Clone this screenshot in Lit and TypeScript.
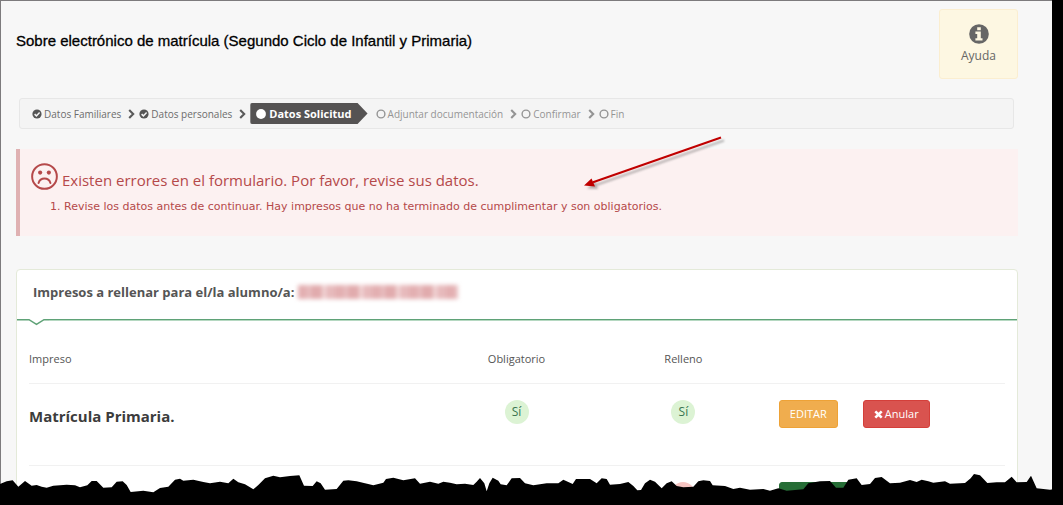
import { LitElement, html, css, svg } from "lit";
import { customElement } from "lit/decorators.js";

type StepState = "done" | "current" | "pending";

interface Step {
  label: string;
  state: StepState;
}

const STEPS: Step[] = [
  { label: "Datos Familiares", state: "done" },
  { label: "Datos personales", state: "done" },
  { label: "Datos Solicitud", state: "current" },
  { label: "Adjuntar documentación", state: "pending" },
  { label: "Confirmar", state: "pending" },
  { label: "Fin", state: "pending" },
];

const stepIcon = (state: StepState) => {
  if (state === "done") {
    return html`<svg class="dot" viewBox="0 0 10 10" aria-hidden="true">
      <circle cx="5" cy="5" r="4.6" fill="currentColor" />
      <path d="M2.6 5.1 4.4 6.9 7.6 3.5" fill="none" stroke="#f4f4f4" stroke-width="1.5" />
    </svg>`;
  }
  if (state === "current") {
    return html`<svg class="dot" viewBox="0 0 10 10" aria-hidden="true">
      <circle cx="5" cy="5" r="4.9" fill="currentColor" />
    </svg>`;
  }
  return html`<svg class="dot" viewBox="0 0 10 10" aria-hidden="true">
    <circle cx="5" cy="5" r="3.9" fill="none" stroke="currentColor" stroke-width="1.4" />
  </svg>`;
};

const chevron = html`<svg class="chevron" viewBox="0 0 7 10" aria-hidden="true">
  <path d="M1.2 1 5.2 5 1.2 9" fill="none" stroke="currentColor" stroke-width="2.1" />
</svg>`;

@customElement("wizard-steps")
export class WizardSteps extends LitElement {
  static styles = css`
    :host {
      display: block;
    }
    .bar {
      display: flex;
      align-items: center;
      box-sizing: border-box;
      min-height: 31px;
      margin: 0;
      padding: 0 12px;
      list-style: none;
      border: 1px solid #e7e7e7;
      border-radius: 3px;
      background: #f4f4f4;
      font-size: 10px;
      line-height: 16px;
    }
    .step {
      display: flex;
      align-items: center;
      color: #6c6c6c;
    }
    .label {
      display: flex;
      align-items: center;
      gap: 2px;
    }
    .dot {
      width: 10px;
      height: 10px;
    }
    .chevron {
      width: 7px;
      height: 10px;
      margin: 0 4px 0 7px;
      color: #5a5a5a;
    }
    .done .dot {
      color: #555;
    }
    .pending,
    .pending .chevron {
      color: #949494;
    }
    .current {
      margin-right: 8px;
    }
    .current .label {
      gap: 3px;
      height: 21px;
      padding: 0 16px 0 6px;
      border-radius: 2px;
      background: #555353;
      clip-path: polygon(0 0, calc(100% - 10px) 0, 100% 50%, calc(100% - 10px) 100%, 0 100%);
      color: #fff;
      font-size: 11px;
      font-weight: 700;
    }
  `;

  render() {
    return html`<ol class="bar">
      ${STEPS.map(
        (step, i) => html`<li class="step ${step.state}" aria-current=${step.state === "current" ? "step" : "false"}>
          <span class="label">${stepIcon(step.state)}<span>${step.label}</span></span>
          ${step.state !== "current" && i < STEPS.length - 1 ? chevron : ""}
        </li>`,
      )}
    </ol>`;
  }
}

@customElement("error-alert")
export class ErrorAlert extends LitElement {
  static styles = css`
    :host {
      display: block;
      box-sizing: border-box;
      min-height: 87px;
      padding: 13px 11px 8px;
      border-left: 4px solid #dfb1b2;
      background: #fcf1f1;
      color: #b5494a;
    }
    .heading {
      display: flex;
      align-items: center;
      gap: 4px;
      margin: 0;
      font-size: 15px;
      font-weight: 400;
      line-height: 20px;
    }
    .heading span {
      padding-top: 8px;
    }
    .face {
      width: 27px;
      height: 27px;
    }
    .list {
      margin: 9px 0 0;
      padding-left: 33px;
      font: 11px/16px "DejaVu Sans", Verdana, sans-serif;
    }
  `;

  render() {
    return html`<h2 class="heading">
        <svg class="face" viewBox="0 0 26 26" aria-hidden="true">
          <circle cx="13" cy="13" r="11.9" fill="none" stroke="currentColor" stroke-width="1.9" />
          <circle cx="8.8" cy="9.2" r="2" fill="currentColor" />
          <circle cx="17.2" cy="9.2" r="2" fill="currentColor" />
          <path d="M7.3 19.2C8.2 16.4 10.4 15 13 15s4.8 1.4 5.7 4.2" fill="none" stroke="currentColor" stroke-width="1.9" stroke-linecap="round" />
        </svg>
        <span>Existen errores en el formulario. Por favor, revise sus datos.</span>
      </h2>
      <ol class="list">
        <li>Revise los datos antes de continuar. Hay impresos que no ha terminado de cumplimentar y son obligatorios.</li>
      </ol>`;
  }
}

@customElement("forms-card")
export class FormsCard extends LitElement {
  static styles = css`
    :host {
      display: block;
      border: 1px solid #e4ead9;
      border-radius: 4px;
      background: #fff;
      color: #555;
    }
    .head {
      display: flex;
      align-items: center;
      gap: 4px;
      height: 44px;
      padding: 0 16px;
    }
    .title {
      margin: 0;
      font-size: 13px;
      font-weight: 700;
      line-height: 18px;
    }
    .redacted {
      width: 160px;
      height: 14px;
      background: repeating-linear-gradient(90deg, #e3afb1 0 9px, #e9bfc1 9px 13px, #e1abad 13px 24px, #f2d6d7 24px 28px, #e7babc 28px 37px);
      filter: blur(2px);
    }
    .rule {
      display: flex;
      height: 10px;
      margin-top: 5px;
      color: #5fa277;
    }
    .notch {
      flex: none;
      width: 32px;
      height: 8px;
    }
    .line {
      flex: 1;
      height: 1px;
      border-bottom: 1px solid #b5d8c1;
      background: currentColor;
    }
    .body {
      padding: 5px 12px 0;
    }
    table {
      width: 100%;
      table-layout: fixed;
      border-collapse: separate;
      border-spacing: 0;
      font-size: 11px;
      line-height: 16px;
    }
    th,
    td {
      padding: 0;
      border-bottom: 1px solid #f1f1f1;
      font-weight: 400;
      text-align: center;
      vertical-align: top;
    }
    thead th {
      height: 32px;
      padding-top: 17px;
    }
    tbody th,
    tbody td {
      height: 65px;
      padding-top: 16px;
    }
    .name {
      width: 41.4%;
      text-align: left;
    }
    .flag {
      width: 17.1%;
    }
    tbody .name {
      padding-top: 22px;
      height: 59px;
      color: #3c3c3c;
      font-size: 15px;
      font-weight: 700;
      line-height: 20px;
    }
    .badge {
      display: inline-block;
      width: 24px;
      height: 24px;
      border-radius: 50%;
      background: #dcf3d4;
      color: #3a7550;
      font-size: 12px;
      line-height: 24px;
    }
    .badge.no {
      background: #f5c4c1;
      color: #a94442;
    }
    .actions {
      display: flex;
      gap: 25px;
      padding-left: 12px;
    }
    button {
      display: flex;
      align-items: center;
      gap: 2px;
      height: 28px;
      padding: 0 10px;
      border: 1px solid #eea236;
      border-radius: 3px;
      background: #f0ad4e;
      color: #fff;
      font: inherit;
    }
    .danger {
      border-color: #d43f3a;
      background: #d9534f;
    }
    .fill {
      border-color: #266d36;
      background: #266d36;
    }
    .cross {
      width: 9px;
      height: 9px;
    }
  `;

  render() {
    return html`<div class="head">
        <h2 class="title">Impresos a rellenar para el/la alumno/a:</h2>
        <span class="redacted"></span>
      </div>
      <div class="rule">
        <svg class="notch" viewBox="0 0 32 8" aria-hidden="true">
          <path d="M0 .7H12L19.500 5.400 27 .7H32" fill="none" stroke="currentColor" stroke-width="1.500" />
        </svg>
        <span class="line"></span>
      </div>
      <div class="body">
        <table>
          <thead>
            <tr>
              <th class="name" scope="col">Impreso</th>
              <th class="flag" scope="col">Obligatorio</th>
              <th class="flag" scope="col">Relleno</th>
              <th aria-label="Acciones"></th>
            </tr>
          </thead>
          <tbody>
            <tr>
              <th class="name" scope="row">Matrícula Primaria.</th>
              <td><span class="badge">Sí</span></td>
              <td><span class="badge">Sí</span></td>
              <td>
                <div class="actions">
                  <button type="button">EDITAR</button>
                  <button type="button" class="danger">
                    <svg class="cross" viewBox="0 0 9 9" aria-hidden="true">
                      <path d="M1.3 1.3 7.7 7.7M7.7 1.3 1.3 7.7" stroke="currentColor" stroke-width="2.6" />
                    </svg>
                    Anular
                  </button>
                </div>
              </td>
            </tr>
            <tr>
              <th class="name" scope="row"></th>
              <td></td>
              <td><span class="badge no"></span></td>
              <td>
                <div class="actions">
                  <button type="button" class="fill" aria-label="Rellenar"><svg width="52" height="9"></svg></button>
                </div>
              </td>
            </tr>
          </tbody>
        </table>
      </div>`;
  }
}

/* Silhouette of the ragged paper edge, in thirds of a pixel, left to right. */
const TORN_EDGE =
  "0,132 20,124 38,121 55,140 75,123 95,137 110,135 125,140 140,143 160,137 200,134 225,136 240,142 262,136 275,123 290,123 310,143 335,142 350,125 368,124 380,135 392,156 430,152 460,157 480,144 505,140 525,119 540,116 550,122 580,119 610,126 630,130 660,125 685,130 700,116 715,127 735,133 760,148 775,135 795,115 820,107 840,112 870,108 898,106 912,137 938,138 950,124 962,130 975,149 1010,147 1030,122 1045,121 1070,124 " +
  "1095,130 1120,136 1150,128 1158,117 1180,113 1210,121 1245,115 1260,131 1290,125 1315,131 1330,125 1350,128 1370,133 1395,131 1420,135 1430,125 1440,114 1453,130 1460,154 1468,130 1478,113 1495,122 1502,133 1520,136 1535,115 1560,114 1575,130 1600,136 1640,130 1675,130 1690,119 1705,126 1718,132 1728,117 1770,117 1790,130 1805,115 1820,117 1830,134 1860,132 1885,126 1900,138 1912,151 1923,150 1935,130 1950,119 1965,125 1985,145 2000,130 2015,124 2030,138 2050,142 2080,140 2095,124 2110,121 " +
  "2130,123 2138,136 2175,138 2200,147 2220,143 2250,149 2290,147 2310,152 2335,145 2360,152 2410,148 2425,130 2460,124 2490,123 2508,143 2530,143 2545,119 2570,115 2585,135 2610,132 2625,114 2645,111 2670,130 2700,128 2730,120 2750,126 2765,119 2785,124 2800,128 2835,124 2850,131 2895,129 2912,115 2922,102 2940,106 2962,129 2990,127 3015,127 3035,110 3050,127 3080,126 3093,107 3110,145 3150,149 3189,143";

@customElement("app-root")
export class AppRoot extends LitElement {
  static styles = css`
    :host {
      display: block;
      position: relative;
      height: 100vh;
      overflow: hidden;
      background: #000;
      font-family: "Open Sans", sans-serif;
    }
    .sheet {
      box-sizing: border-box;
      min-height: 100%;
      margin-right: 11px;
      padding: 8px 34px 0 15px;
      border-top: 1px solid #7d7b7d;
      border-left: 1px solid #7d7b7d;
      background: #f7f7f7;
    }
    .top {
      display: flex;
      justify-content: space-between;
      align-items: flex-start;
    }
    .title {
      margin: 0;
      padding-top: 21px;
      color: #000;
      font: 400 15px/22px "Liberation Sans", Arial, sans-serif;
      -webkit-text-stroke: 0.3px #000;
    }
    .help {
      display: flex;
      flex-direction: column;
      align-items: center;
      box-sizing: border-box;
      width: 79px;
      height: 70px;
      padding: 14px 0 0;
      border: 1px solid #fbeed0;
      border-radius: 3px;
      background: #fdf7e2;
      color: #666;
      font: 12px/16px "Open Sans", sans-serif;
      text-decoration: none;
    }
    .info {
      width: 20px;
      height: 20px;
      margin-bottom: 4px;
    }
    wizard-steps {
      margin: 19px 4px 20px 3px;
    }
    forms-card {
      margin-top: 33px;
    }
    .pointer {
      position: absolute;
      left: 580px;
      top: 134px;
      width: 150px;
      height: 60px;
    }
    .torn {
      position: absolute;
      left: 0;
      bottom: 0;
      width: 100%;
      height: 40px;
    }
  `;

  render() {
    return html`<main class="sheet">
        <header class="top">
          <h1 class="title">Sobre electrónico de matrícula (Segundo Ciclo de Infantil y Primaria)</h1>
          <a class="help" href="#ayuda">
            <svg class="info" viewBox="0 0 20 20" aria-hidden="true">
              <circle cx="10" cy="10" r="9.8" fill="currentColor" />
              <path d="M8.2 3.2h3.6v3H8.2zM6.4 7.6h5.4v6.6h1.7v2.3H6.4v-2.3h1.8V9.9H6.4z" fill="#fdf7e2" />
            </svg>
            Ayuda
          </a>
        </header>
        <wizard-steps></wizard-steps>
        <error-alert></error-alert>
        <forms-card></forms-card>
      </main>
      <svg class="pointer" viewBox="0 0 150 60" aria-hidden="true">
        <defs>
          <filter id="soft" x="-10%" y="-10%" width="120%" height="130%"><feGaussianBlur stdDeviation="1" /></filter>
        </defs>
        ${svg`<g transform="translate(3 3)" filter="url(#soft)" opacity=".35">
          <path d="M141 3.5 13 48" stroke="#333" stroke-width="2" />
          <path d="M4 51.5 12 44.5 15 52z" fill="#333" />
        </g>
        <path d="M141 3.5 13 48.3" stroke="#c00000" stroke-width="2" />
        <path d="M4 51.5 11.5 44.5 15 52.5z" fill="#c00000" />`}
      </svg>
      <svg class="torn" viewBox="0 75 3189 120" preserveAspectRatio="none" aria-hidden="true">
        <polygon points="${TORN_EDGE} 3189,195 0,195" fill="#000" />
      </svg>`;
  }
}
